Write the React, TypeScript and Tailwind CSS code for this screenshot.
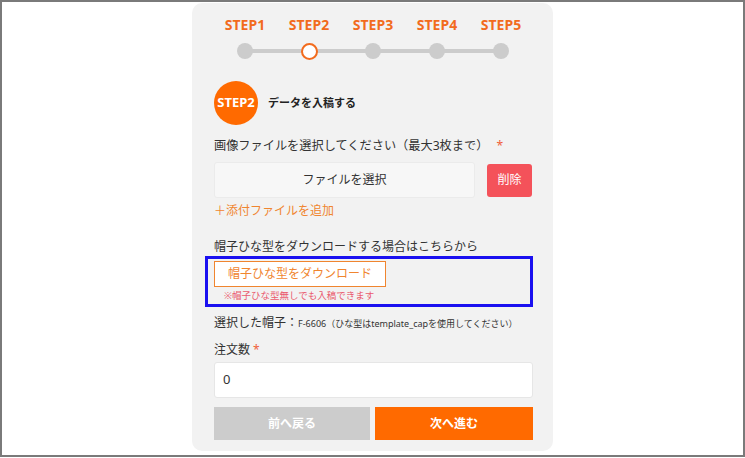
const steps = ["STEP1", "STEP2", "STEP3", "STEP4", "STEP5"];

const font = { fontFamily: '"Noto Sans", "Noto Sans CJK JP", sans-serif' };

export default function App() {
  return (
    <div
      className="w-[745px] h-[457px] border-2 border-[#7a7a7a] bg-white flex justify-center overflow-hidden text-[#333]"
      style={font}
    >
      <div className="w-[361px] h-[448px] mt-[1px] bg-[#f2f2f2] rounded-[10px] pl-[21px] pr-[20px] whitespace-nowrap">
        {/* step indicator */}
        <div className="mt-[11px] w-[320px]">
          <div className="flex">
            {steps.map((s) => (
              <div key={s} className="w-[64px] text-center text-[14px] font-bold leading-[22px] text-[#f26b1d]">
                {s}
              </div>
            ))}
          </div>
          <div className="relative mt-[7px] h-[16px]">
            <div className="absolute left-[32px] right-[32px] top-[6px] h-[4px] bg-[#cccccc]" />
            <div className="relative flex">
              {steps.map((s, i) => (
                <div key={s} className="w-[64px] flex justify-center">
                  {i === 1 ? (
                    <div className="w-[17px] h-[17px] rounded-full bg-white border-[2.5px] border-[#f26b1d] -mt-[0.5px]" />
                  ) : (
                    <div className="w-[16px] h-[16px] rounded-full bg-[#cccccc]" />
                  )}
                </div>
              ))}
            </div>
          </div>
        </div>

        {/* step heading */}
        <div className="flex items-center mt-[22px] ml-[1px] gap-[10px]">
          <div className="w-[44px] h-[44px] rounded-full bg-[#ff6a00] flex items-center justify-center text-white font-bold text-[13px]">
            STEP2
          </div>
          <div className="text-[11px] font-bold text-[#222]">データを入稿する</div>
        </div>

        <div className="ml-[1px]">
          <div className="mt-[12px] text-[12.2px] leading-[18px]">
            画像ファイルを選択してください（最大3枚まで）
            <span className="text-[#f0603a] ml-[8px]">*</span>
          </div>

          <div className="flex items-center mt-[7px] gap-[12px]">
            <div className="w-[261px] h-[36px] bg-[#f7f7f7] border border-[#ebebeb] rounded-[3px] flex items-center justify-center text-[12px]">
              ファイルを選択
            </div>
            <div className="w-[45px] h-[33px] bg-[#f4525a] rounded-[3px] flex items-center justify-center text-white text-[12px]">
              削除
            </div>
          </div>

          <div className="mt-[4px] text-[12px] leading-[18px] text-[#f0852f]">＋添付ファイルを追加</div>

          <div className="mt-[18px] text-[12px] leading-[18px]">帽子ひな型をダウンロードする場合はこちらから</div>

          <div className="-ml-[9px] w-[328px] h-[51px] border-[3px] border-[#1a10f0] pl-[6px] pt-[2px]">
            <div className="w-[172px] h-[26px] bg-white border border-[#f0852f] flex items-center justify-center text-[12px] text-[#f0852f]">
              帽子ひな型をダウンロード
            </div>
            <div className="ml-[10px] mt-[2px] text-[9.5px] leading-[14px] text-[#ea5a6e]">※帽子ひな型無しでも入稿できます</div>
          </div>

          <div className="mt-[5px] flex items-baseline leading-[22px]">
            <span className="text-[12px]">選択した帽子：</span>
            <span className="text-[9px]">F-6606（ひな型はtemplate_capを使用してください）</span>
          </div>

          <div className="mt-[6px] text-[12px] leading-[18px]">
            注文数<span className="text-[#f0603a] ml-[3px]">*</span>
          </div>

          <div className="mt-[3px] w-[319px] h-[36px] bg-white border border-[#e6e6e6] rounded-[3px] flex items-center px-[8px] text-[13px]">
            0
          </div>

          <div className="flex mt-[9px] gap-[5px]">
            <div className="w-[156px] h-[33px] bg-[#cccccc] flex items-center justify-center text-white font-bold text-[12px]">
              前へ戻る
            </div>
            <div className="w-[158px] h-[33px] bg-[#ff6a00] flex items-center justify-center text-white font-bold text-[12px]">
              次へ進む
            </div>
          </div>
        </div>
      </div>
    </div>
  );
}
